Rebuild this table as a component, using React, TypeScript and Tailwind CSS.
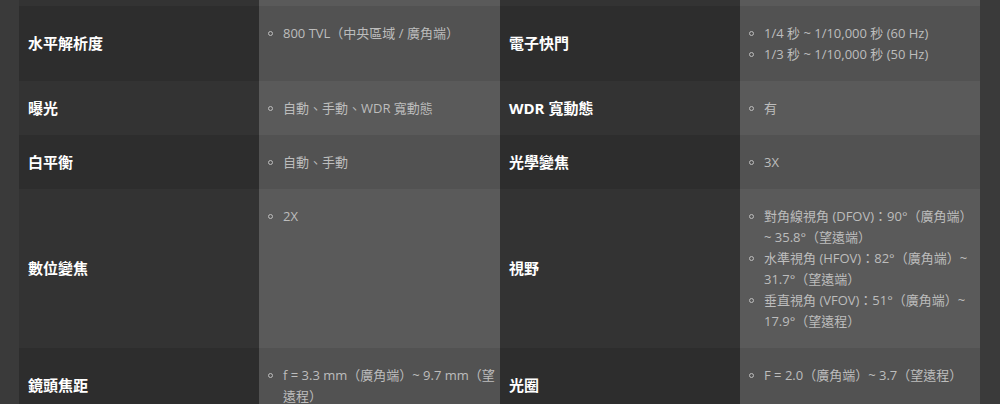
import React from "react";

type Spec = {
  label1: string;
  values1: string[];
  label2: string;
  values2: string[];
};

const SPECS: Spec[] = [
  {
    label1: "水平解析度",
    values1: ["800 TVL（中央區域 / 廣角端）"],
    label2: "電子快門",
    values2: ["1/4 秒 ~ 1/10,000 秒 (60 Hz)", "1/3 秒 ~ 1/10,000 秒 (50 Hz)"],
  },
  {
    label1: "曝光",
    values1: ["自動、手動、WDR 寬動態"],
    label2: "WDR 寬動態",
    values2: ["有"],
  },
  {
    label1: "白平衡",
    values1: ["自動、手動"],
    label2: "光學變焦",
    values2: ["3X"],
  },
  {
    label1: "數位變焦",
    values1: ["2X"],
    label2: "視野",
    values2: [
      "對角線視角 (DFOV)：90°（廣角端）~ 35.8°（望遠端）",
      "水準視角 (HFOV)：82°（廣角端）~ 31.7°（望遠端）",
      "垂直視角 (VFOV)：51°（廣角端）~ 17.9°（望遠程）",
    ],
  },
  {
    label1: "鏡頭焦距",
    values1: ["f = 3.3 mm（廣角端）~ 9.7 mm（望遠程）"],
    label2: "光圈",
    values2: ["F = 2.0（廣角端）~ 3.7（望遠程）"],
  },
];

const Label = ({ text, dark }: { text: string; dark: boolean }) => (
  <div
    className={`flex items-center pl-[9px] pr-2 text-[15px] font-bold text-white ${
      dark ? "bg-[#2d2d2d]" : "bg-[#333333]"
    }`}
  >
    {text}
  </div>
);

const Values = ({
  items,
  dark,
  narrow,
}: {
  items: string[];
  dark: boolean;
  narrow?: boolean;
}) => (
  <ul
    className={`pl-[9px] pt-[17px] pb-4 text-[13px] leading-[21px] text-[#bdbdbd] ${
      narrow ? "pr-[4px]" : "pr-2"
    } ${dark ? "bg-[#525252]" : "bg-[#5a5a5a]"}`}
  >
    {items.map((item) => (
      <li key={item} className="flex">
        <span className="mt-[8px] mr-[10px] h-[5px] w-[5px] shrink-0 rounded-full border border-[#bdbdbd]" />
        <span>{item}</span>
      </li>
    ))}
  </ul>
);

export default function App() {
  return (
    <div className="h-[404px] overflow-hidden bg-[#3a3a3a] pl-[19px] pr-[20px] font-['Open_Sans','Noto_Sans_CJK_TC',sans-serif]">
      <div className="grid grid-cols-[240px_241px_240px_240px]">
        <div className="h-[6px] bg-[#333333]" />
        <div className="h-[6px] bg-[#5a5a5a]" />
        <div className="h-[6px] bg-[#333333]" />
        <div className="h-[6px] bg-[#5a5a5a]" />
        {SPECS.map((row, i) => {
          const dark = i % 2 === 0;
          return (
            <React.Fragment key={row.label1}>
              <Label text={row.label1} dark={dark} />
              <Values items={row.values1} dark={dark} narrow />
              <Label text={row.label2} dark={dark} />
              <Values items={row.values2} dark={dark} />
            </React.Fragment>
          );
        })}
      </div>
    </div>
  );
}
